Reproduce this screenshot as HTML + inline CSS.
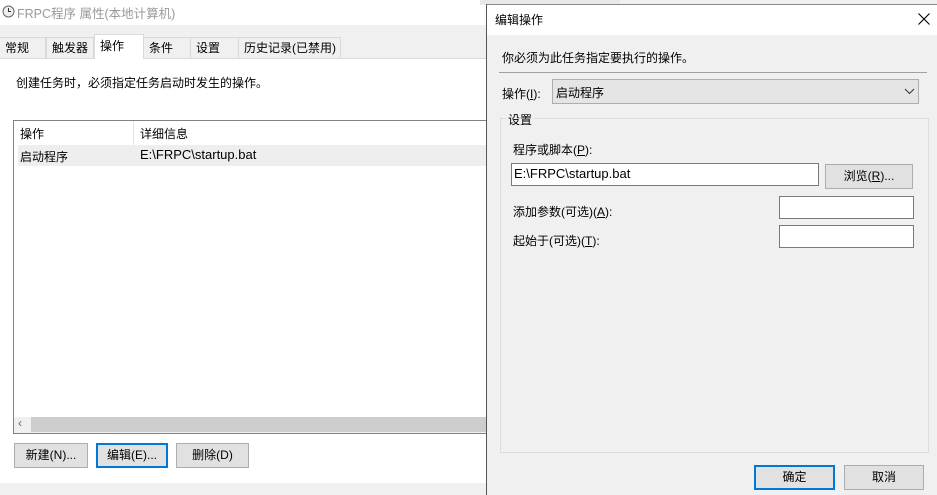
<!DOCTYPE html>
<html><head><meta charset="utf-8"><style>
*{box-sizing:border-box;margin:0;padding:0}
body{width:937px;height:495px;overflow:hidden;background:#f0f0f0;position:relative;font-family:"Liberation Sans","Noto Sans CJK SC",sans-serif;font-size:12px;color:#000}
.a{position:absolute;white-space:nowrap}
.btn{position:absolute;background:#e1e1e1;border:1px solid #adadad;text-align:center;line-height:22px}
.inp{position:absolute;background:#fff;border:1px solid #7a7a7a}
.tab{position:absolute;top:37px;height:21px;border:1px solid #d9d9d9;border-bottom:none;background:#f0f0f0;line-height:21px;padding-left:5px}
</style></head><body>
<div class="a" style="left:0;top:0;width:487px;height:25px;background:#fff"></div>
<svg class="a" style="left:2px;top:5px" width="13" height="13"><circle cx="6.5" cy="6.5" r="5.5" stroke="#666" fill="#eee"/><path d="M6.5 3V6.5H9" stroke="#333" fill="none"/></svg>
<div class="a" style="left:17px;top:3px;color:#999;font-size:12.5px">FRPC程序 属性(本地计算机)</div>
<div class="tab" style="left:0;width:46px;border-left:none">常规</div>
<div class="tab" style="left:46px;width:48px">触发器</div>
<div class="tab" style="left:143px;width:48px">条件</div>
<div class="tab" style="left:190px;width:49px">设置</div>
<div class="tab" style="left:238px;width:103px">历史记录(已禁用)</div>
<div class="a" style="left:0;top:58px;width:487px;height:425px;background:#fff;border-top:1px solid #d9d9d9"></div>
<div class="tab" style="left:94px;top:34px;width:50px;height:25px;background:#fff;border-color:#d9d9d9;line-height:22px">操作</div>
<div class="a" style="left:16px;top:74px">创建任务时，必须指定任务启动时发生的操作。</div>
<div class="a" style="left:13px;top:120px;width:480px;height:314px;border:1px solid #828282;background:#fff"></div>
<div class="a" style="left:133px;top:121px;width:1px;height:24px;background:#e5e5e5"></div>
<div class="a" style="left:20px;top:125px">操作</div>
<div class="a" style="left:140px;top:125px">详细信息</div>
<div class="a" style="left:18px;top:145px;width:470px;height:21px;background:#eeeeee"></div>
<div class="a" style="left:20px;top:148px">启动程序</div>
<div class="a" style="left:140px;top:147px;font-size:13px">E:\FRPC\startup.bat</div>
<div class="a" style="left:14px;top:417px;width:474px;height:16px;background:#f0f0f0"></div>
<div class="a" style="left:31px;top:417px;width:457px;height:15px;background:#cdcdcd"></div>
<div class="a" style="left:18px;top:416px;color:#606060;font-size:12px">‹</div>
<div class="btn" style="left:14px;top:443px;width:74px;height:25px">新建(N)...</div>
<div class="btn" style="left:96px;top:443px;width:72px;height:25px;border:2px solid #0078d7;line-height:21px">编辑(E)...</div>
<div class="btn" style="left:176px;top:443px;width:73px;height:25px">删除(D)</div>
<div class="a" style="left:480px;top:0;width:140px;height:5px;background:#e8e8e8"></div>
<div class="a" style="left:486px;top:4px;width:451px;height:491px;background:#f0f0f0;border-left:1px solid #555;border-top:1px solid #888"></div>
<div class="a" style="left:487px;top:5px;width:450px;height:30px;background:#fff"></div>
<div class="a" style="left:495px;top:11px">编辑操作</div>
<svg class="a" style="left:918px;top:13px" width="12" height="12"><path d="M0.5 0.5L11.5 11.5M11.5 0.5L0.5 11.5" stroke="#000" stroke-width="1.1"/></svg>
<div class="a" style="left:502px;top:49px">你必须为此任务指定要执行的操作。</div>
<div class="a" style="left:499px;top:72px;width:428px;height:1px;background:#a0a0a0"></div>
<div class="a" style="left:502px;top:85px">操作(<u>I</u>):</div>
<div class="a" style="left:552px;top:79px;width:367px;height:25px;background:#e5e5e5;border:1px solid #adadad"></div>
<div class="a" style="left:556px;top:84px">启动程序</div>
<svg class="a" style="left:904px;top:88px" width="11" height="7"><path d="M1 1L5.5 5.5L10 1" stroke="#333" fill="none"/></svg>
<div class="a" style="left:500px;top:118px;width:429px;height:335px;border:1px solid #dcdcdc"></div>
<div class="a" style="left:506px;top:111px;background:#f0f0f0;padding:0 2px">设置</div>
<div class="a" style="left:513px;top:141px">程序或脚本(<u>P</u>):</div>
<div class="inp" style="left:511px;top:163px;width:308px;height:23px"></div>
<div class="a" style="left:514px;top:166px;font-size:13px">E:\FRPC\startup.bat</div>
<div class="btn" style="left:825px;top:164px;width:88px;height:25px">浏览(<u>R</u>)...</div>
<div class="a" style="left:513px;top:203px">添加参数(可选)(<u>A</u>):</div>
<div class="inp" style="left:779px;top:196px;width:135px;height:23px"></div>
<div class="a" style="left:513px;top:232px">起始于(可选)(<u>T</u>):</div>
<div class="inp" style="left:779px;top:225px;width:135px;height:23px"></div>
<div class="btn" style="left:754px;top:465px;width:81px;height:25px;border:2px solid #0078d7;line-height:21px">确定</div>
<div class="btn" style="left:844px;top:465px;width:80px;height:25px">取消</div>
</body></html>
